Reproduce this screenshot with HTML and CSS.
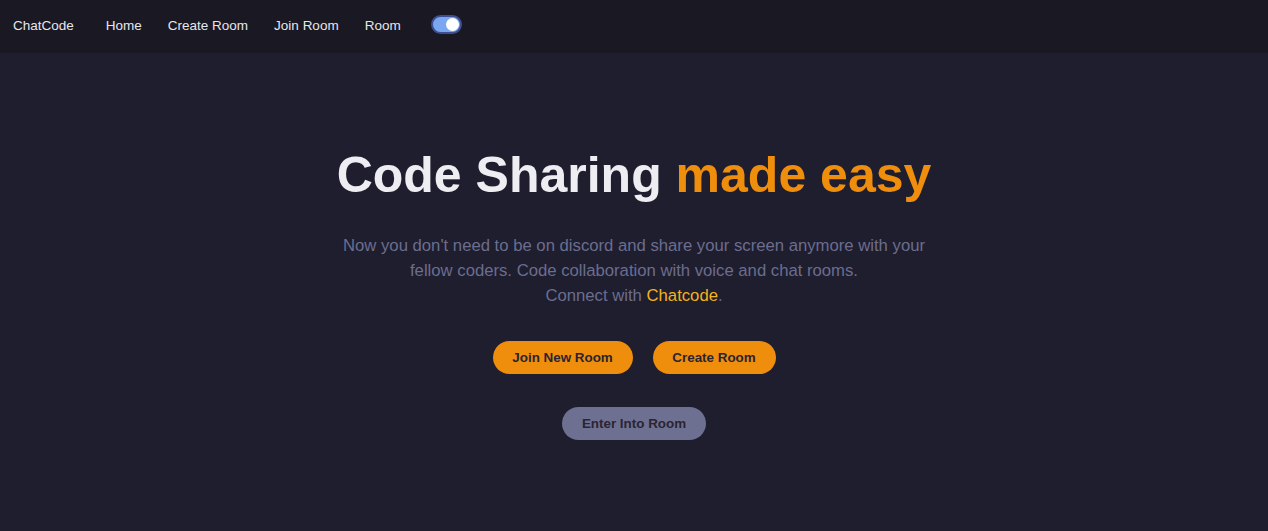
FILE: index.html
```html
<!DOCTYPE html>
<html>
<head>
<meta charset="utf-8">
<link rel="stylesheet" href="styles.css">
</head>
<body>
<nav class="nav">
  <span class="brand">ChatCode</span>
  <a class="nav-link" href="#">Home</a>
  <a class="nav-link" href="#">Create Room</a>
  <a class="nav-link" href="#">Join Room</a>
  <a class="nav-link" href="#">Room</a>
  <span class="toggle"><span class="knob"></span></span>
</nav>
<main class="hero">
  <h1 class="title">Code Sharing <span class="accent">made easy</span></h1>
  <p class="lead">Now you don't need to be on discord and share your screen anymore with your fellow coders. Code collaboration with voice and chat rooms.<br>Connect with <span class="hl">Chatcode</span>.</p>
  <div class="actions">
    <button class="btn btn-orange btn-join">Join New Room</button>
    <button class="btn btn-orange btn-create">Create Room</button>
  </div>
  <button class="btn btn-grey">Enter Into Room</button>
</main>
</body>
</html>
```
FILE: styles.css
```css
html, body {
  margin: 0;
  padding: 0;
}
body {
  background: #1e1e2e;
  font-family: "Liberation Sans", Arial, sans-serif;
  height: 531px;
  overflow: hidden;
}
.nav {
  height: 53px;
  background: #1a1823;
  display: flex;
  align-items: center;
  padding: 0 0 2px 13px;
  box-sizing: border-box;
}
.brand {
  color: #e6e6ec;
  font-size: 13.5px;
  margin-right: 32px;
}
.nav-link {
  color: #e6e6ec;
  font-size: 13.5px;
  text-decoration: none;
  margin-right: 26px;
}
.toggle {
  width: 31px;
  height: 19px;
  border-radius: 10px;
  background: #7aa7ef;
  border: 2px solid #3d4f93;
  display: flex;
  align-items: center;
  justify-content: flex-end;
  padding: 0 1px;
  box-sizing: border-box;
  margin-left: 4px;
  margin-top: -3px;
}
.knob {
  width: 13px;
  height: 13px;
  border-radius: 50%;
  background: #ffffff;
}
.hero {
  display: flex;
  flex-direction: column;
  align-items: center;
  padding-top: 93px;
}
.title {
  margin: 0;
  font-size: 50px;
  font-weight: 700;
  color: #eeeef2;
  line-height: 58px;
}
.accent {
  color: #ef8e0c;
}
.lead {
  margin: 29px 0 0;
  width: 610px;
  text-align: center;
  font-size: 16.7px;
  line-height: 25px;
  color: #6c6d8f;
}
.hl {
  color: #f4b21c;
}
.actions {
  display: flex;
  gap: 20px;
  margin-top: 33px;
}
.btn {
  border: none;
  border-radius: 17px;
  height: 33px;
  font-family: "Liberation Sans", Arial, sans-serif;
  font-weight: 700;
  font-size: 13.4px;
  color: #2a2433;
  padding: 0;
}
.btn-orange {
  background: #ef8e0c;
}
.btn-join {
  width: 140px;
}
.btn-create {
  width: 123px;
}
.btn-grey {
  background: #6e7091;
  width: 144px;
  margin-top: 33px;
}
```
